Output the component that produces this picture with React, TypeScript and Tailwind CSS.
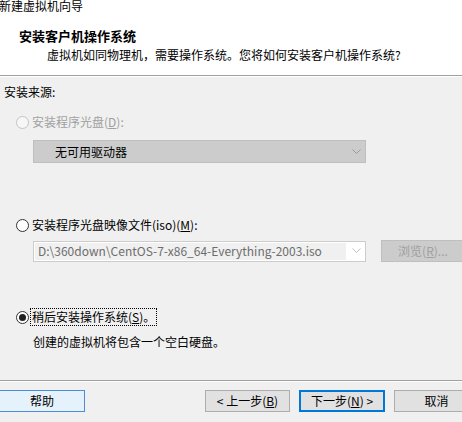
import React from "react";

const FONT = '"Noto Sans CJK SC", "Noto Sans", sans-serif';

function Radio({ state }: { state: "disabled" | "off" | "on" }) {
  const border =
    state === "disabled" ? "border-[#c4c4c4] bg-[#f7f7f7]" : "border-[#333333] bg-white";
  return (
    <span
      className={`flex h-[13px] w-[13px] shrink-0 items-center justify-center rounded-full border ${border}`}
    >
      {state === "on" && <span className="h-[7px] w-[7px] rounded-full bg-[#202020]" />}
    </span>
  );
}

function Chevron({ color }: { color: string }) {
  return (
    <svg width="9" height="6" viewBox="0 0 9 6" className="shrink-0">
      <polyline points="0.5,0.5 4.5,4.5 8.5,0.5" fill="none" stroke={color} strokeWidth="1" />
    </svg>
  );
}

export default function App() {
  return (
    <div
      className="relative h-[422px] w-[462px] overflow-hidden bg-[#f0f0f0] text-[12px] text-black"
      style={{ fontFamily: FONT }}
    >
      {/* Header */}
      <div className="h-[77px] bg-white">
        <div className="-mt-[2px] ml-[-1px] whitespace-nowrap text-[12px] leading-[16px]">
          新建虚拟机向导
        </div>
        <div className="ml-[19px] mt-[14px] whitespace-nowrap text-[13px] font-bold leading-[16px]">
          安装客户机操作系统
        </div>
        <div className="ml-[47px] mt-[3px] whitespace-nowrap leading-[16px]">
          虚拟机如同物理机，需要操作系统。您将如何安装客户机操作系统?
        </div>
      </div>
      <div className="h-px bg-[#a0a0a0]" />
      <div className="h-px bg-white" />

      {/* Body */}
      <div className="flex h-[303px] flex-col">
        <div className="ml-[4px] mt-[7px] leading-[16px]">安装来源:</div>

        <div className="ml-[16px] mt-[14px] flex items-center gap-[3px] leading-[16px]">
          <Radio state="disabled" />
          <span className="text-[#a0a0a0]">
            安装程序光盘(<span className="underline">D</span>):
          </span>
        </div>

        <div className="ml-[33px] mt-[10px] flex h-[23px] w-[333px] items-center justify-between border border-[#bfbfbf] bg-[#cccccc] pl-[21px] pr-[4px]">
          <span className="leading-[16px]">无可用驱动器</span>
          <Chevron color="#9a9a9a" />
        </div>

        <div className="ml-[16px] mt-[54px] flex items-center gap-[3px] leading-[16px]">
          <Radio state="off" />
          <span>
            安装程序光盘映像文件(iso)(<span className="underline">M</span>):
          </span>
        </div>

        <div className="mt-[7px] flex items-center">
          <div className="ml-[33px] flex h-[21px] w-[333px] shrink-0 items-center border border-[#cccccc] bg-white p-px pr-[4px]">
            <div className="flex h-full w-[311px] items-center bg-[#f0f0f0] pl-[3px] leading-[16px] text-[#6d6d6d]">
              D:\360down\CentOS-7-x86_64-Everything-2003.iso
            </div>
            <div className="flex flex-1 justify-end">
              <Chevron color="#c0c0c0" />
            </div>
          </div>
          <div className="ml-[15px] flex h-[22px] w-[84px] shrink-0 items-center justify-center border border-[#bfbfbf] bg-[#cccccc] text-[#a0a0a0] leading-[16px]">
            浏览(<span className="underline">R</span>)...
          </div>
        </div>

        <div className="ml-[16px] mt-[47px] flex items-center gap-[2px] leading-[16px]">
          <Radio state="on" />
          <span className="px-px outline outline-1 outline-dotted outline-black">
            稍后安装操作系统(<span className="underline">S</span>)。
          </span>
        </div>

        <div className="ml-[33px] mt-[9px] leading-[16px]">创建的虚拟机将包含一个空白硬盘。</div>
      </div>

      <div className="h-px bg-[#a0a0a0]" />
      <div className="h-px bg-white" />

      {/* Footer buttons */}
      <div className="mt-[8px] flex items-center">
        <div className="-ml-px flex h-[22px] w-[86px] shrink-0 items-center justify-center border border-[#4a8fd6] bg-[#e5f1fb] leading-[16px]">
          帮助
        </div>
        <div className="ml-[120px] flex h-[22px] w-[85px] shrink-0 items-center justify-center border border-[#adadad] bg-[#e1e1e1] leading-[16px]">
          &lt; 上一步(<span className="underline">B</span>)
        </div>
        <div className="ml-[9px] flex h-[22px] w-[86px] shrink-0 items-center justify-center border-2 border-[#0078d7] bg-[#e1e1e1] leading-[16px]">
          下一步(<span className="underline">N</span>) &gt;
        </div>
        <div className="ml-[9px] flex h-[22px] w-[85px] shrink-0 items-center justify-center border border-[#adadad] bg-[#e1e1e1] leading-[16px]">
          取消
        </div>
      </div>
    </div>
  );
}
